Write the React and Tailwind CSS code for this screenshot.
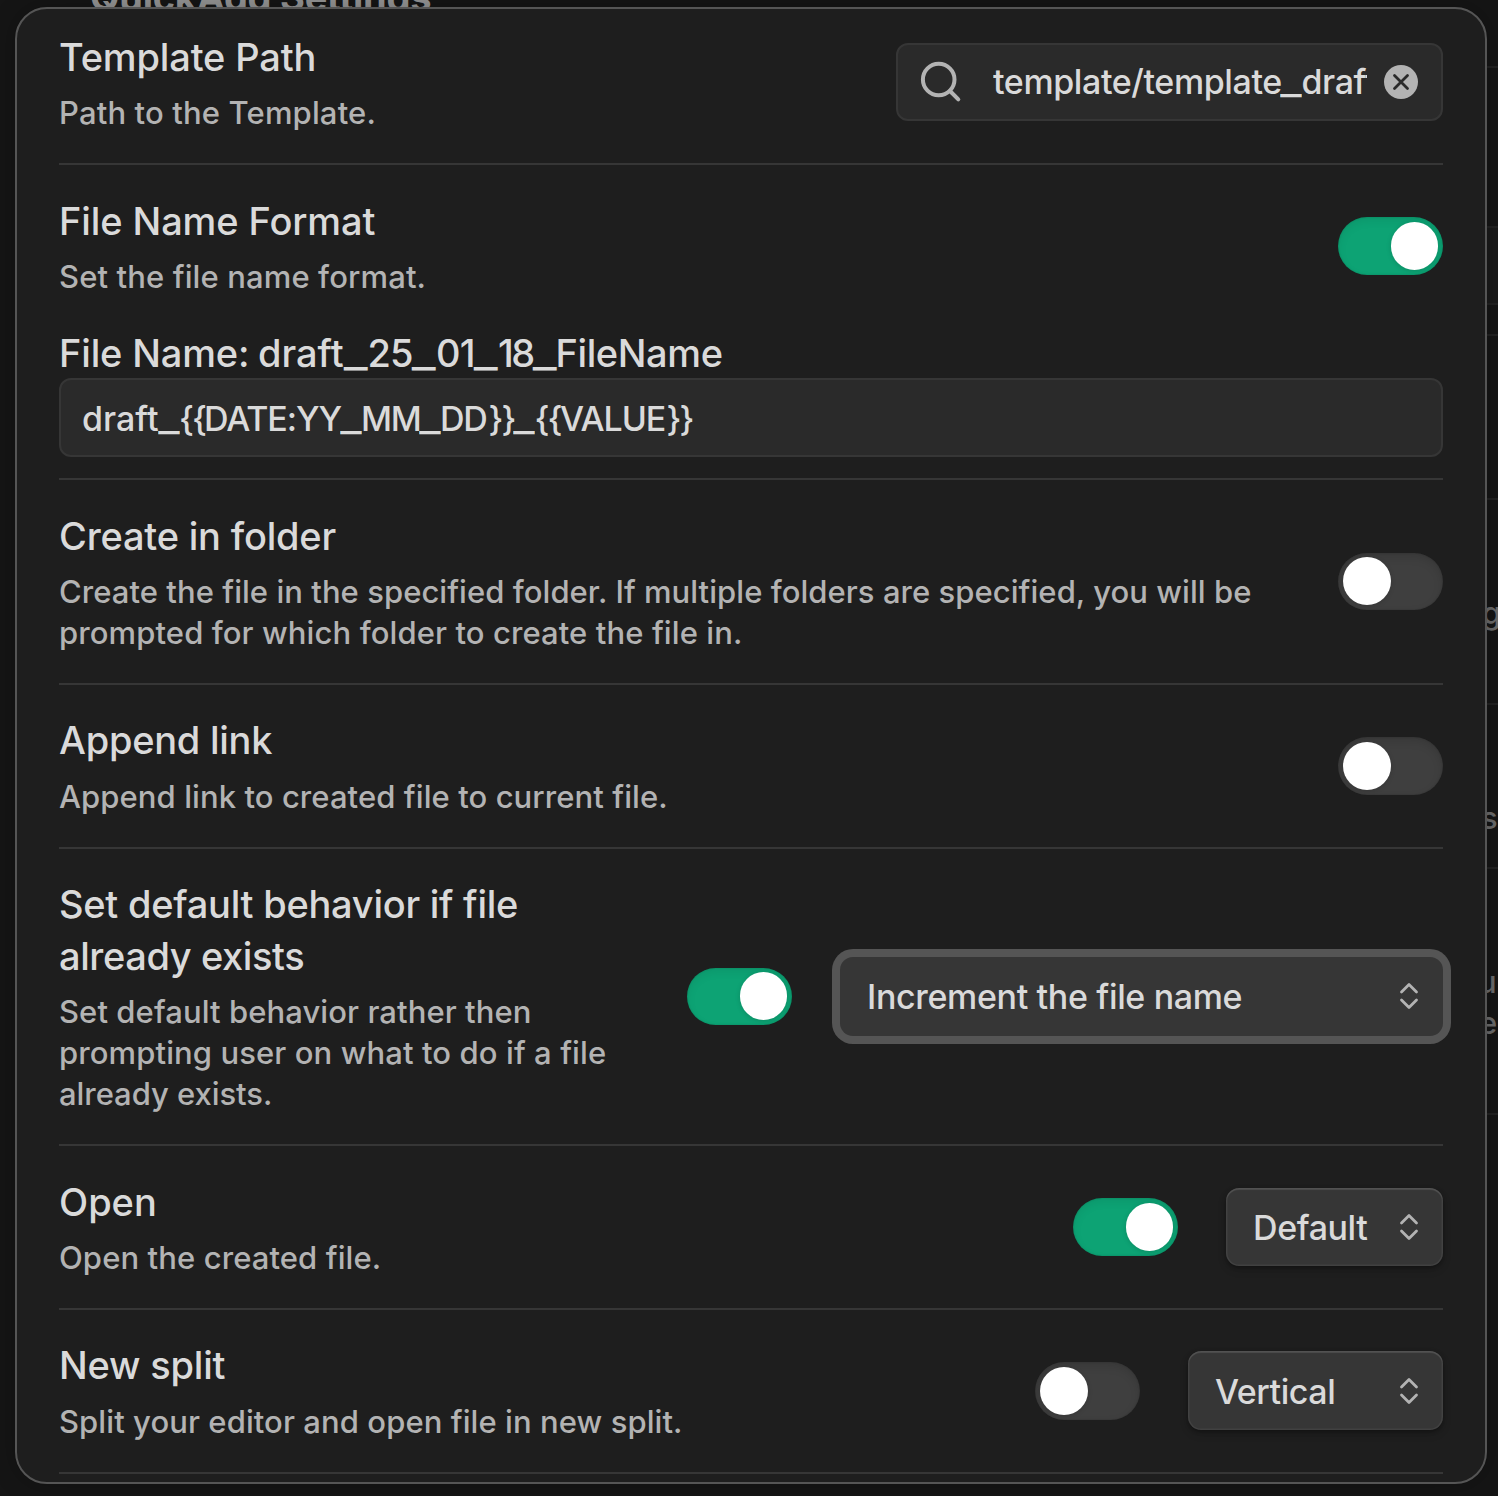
function Toggle({ on, short }) {
  return (
    <div
      className={
        "flex w-[105px] shrink-0 items-center rounded-full px-[5px] " +
        (short ? "-mt-px h-[57px] " : "h-[58px] ") +
        (on
          ? "justify-end bg-[#0da374] shadow-[inset_0_4px_10px_rgba(0,0,0,0.07),inset_0_0_2px_rgba(0,0,0,0.2)]"
          : "justify-start bg-[#3f3f3f] shadow-[inset_0_4px_10px_rgba(0,0,0,0.12),inset_0_0_2px_rgba(0,0,0,0.2)]")
      }
    >
      <div className="size-[47.5px] rounded-full bg-white shadow-[0_1px_5px_rgba(0,0,0,0.15)]" />
    </div>
  );
}

function Chevrons({ className = "" }) {
  return (
    <svg className={"shrink-0 " + className} width="20" height="28" viewBox="0 0 20 28" fill="none" stroke="#b3b3b3" strokeWidth="2.8" strokeLinecap="round" strokeLinejoin="round">
      <path d="M2.5 10 10 2.5 17.5 10M2.5 18 10 25.5 17.5 18" />
    </svg>
  );
}

function Select({ label, size, focused, tracking }) {
  return (
    <div
      className={
        "flex shrink-0 items-center justify-between rounded-[13px] bg-[#363636] pr-6 pl-[27px] text-[34px] text-[#dadada] " +
        size +
        (focused
          ? " shadow-[0_0_0_8px_#555555]"
          : " shadow-[inset_0_2px_1px_rgba(255,255,255,0.09),inset_0_0_0_1.5px_rgba(255,255,255,0.06),0_2px_4px_rgba(0,0,0,0.3),0_4px_10px_rgba(0,0,0,0.12)]")
      }
    >
      <span className={"whitespace-nowrap " + tracking}>{label}</span>
      <Chevrons className={focused ? "-mt-[2px]" : ""} />
    </div>
  );
}

/* A run of text in segments; underscores are stretched to the given advance. */
function Segments({ parts, bar }) {
  return parts.map(([text, style], i) =>
    text === "_" ? (
      <span key={i} className={"inline-block text-center tracking-normal " + bar}>
        <span className="inline-block scale-x-[1.36]">_</span>
      </span>
    ) : (
      <span key={i} className={"inline-block whitespace-pre " + style}>{text}</span>
    )
  );
}

const NAME_PARTS = [
  ["File Name: ", "tracking-[-0.15px] w-[199px]"],
  ["draft", "w-[85.5px]"],
  ["_"],
  ["25", "w-[44.5px] tracking-[-0.9px]"],
  ["_"],
  ["01", "w-[38px] tracking-[-0.8px]"],
  ["_"],
  ["18", "w-[34.5px] tracking-[-2.4px]"],
  ["_"],
  ["FileName", "-ml-px tracking-[-0.4px]"],
];

const FORMAT_PARTS = [
  ["draft", "w-[76.5px]"],
  ["_"],
  ["{{", "w-[25px] tracking-[-2px]"],
  ["DATE:YY", "w-[136.5px] tracking-[-1.1px]"],
  ["_"],
  ["MM", "w-[58.5px] tracking-[-1.2px]"],
  ["_"],
  ["DD", "w-[48.5px] tracking-[-1.2px]"],
  ["}}", "w-[25.5px] tracking-[-2px]"],
  ["_"],
  ["{{", "w-[25.5px] tracking-[-2px]"],
  ["VALUE", "w-[106.5px] tracking-[-1.1px]"],
  ["}}", "tracking-[-2px]"],
];

function Line({ children, track }) {
  return <div className={"whitespace-nowrap " + track}>{children}</div>;
}

function Row({ title, desc, height, pad = "pt-[30px]", gap = "mt-[9px]", first, children }) {
  return (
    <div className={"flex shrink-0 justify-between " + height + (first ? "" : " border-t-2 border-[#363636]")}>
      <div className={pad}>
        <div className="text-[38px] leading-[52px] text-[#dadada]">
          {title.map(([t, k]) => <Line key={t} track={k}>{t}</Line>)}
        </div>
        <div className={"text-[31px] leading-[41px] text-[#b3b3b3] " + gap}>
          {desc.map(([t, k]) => <Line key={t} track={k}>{t}</Line>)}
        </div>
      </div>
      <div className="flex items-center gap-12">{children}</div>
    </div>
  );
}

function Backdrop() {
  return (
    <div className="col-start-1 row-start-1 flex justify-between overflow-hidden">
      <div className="-mt-[27px] ml-[90px] text-[38px] leading-[48px] font-bold tracking-[-0.25px] whitespace-nowrap text-[#969696]">
        QuickAdd Settings
      </div>
      <div className="flex w-[14px] flex-col overflow-hidden text-[31px] leading-[41px] text-[#6c6c6c]">
        <div className="h-[66px]" />
        <div className="h-[160px] border-t-2 border-[#222222]" />
        <div className="h-[79px] border-y-2 border-[#222222] bg-[#1a1a1a]" />
        <div className="h-[29px]" />
        <div className="h-[164px] border-t-2 border-[#222222]" />
        <div className="h-[205px] border-t-2 border-[#222222] pt-[92px]"><div className="-ml-[2px]">g</div></div>
        <div className="h-[164px] border-t-2 border-[#222222] pt-[92px]"><div className="-ml-[3px]">s</div></div>
        <div className="h-[246px] border-t-2 border-[#222222] pt-[92px]">
          <div className="-ml-[6px] whitespace-nowrap">u.</div>
          <div className="-ml-[5px] whitespace-nowrap">ea</div>
        </div>
        <div className="h-[300px] border-t-2 border-[#222222]" />
      </div>
    </div>
  );
}

export default function App() {
  return (
    <div className="grid h-[1496px] w-[1498px] grid-cols-1 grid-rows-[1496px] overflow-hidden bg-[#151515] font-['Inter','Liberation_Sans',sans-serif] font-[450]">
      <Backdrop />
      <div className="z-10 col-start-1 row-start-1 mt-[7px] ml-[15px] flex h-[1477px] w-[1472px] flex-col overflow-hidden rounded-[32px] border-2 border-[#555555] bg-[#1e1e1e] px-[42px] shadow-[0_0_24px_rgba(0,0,0,0.25)]">
        <Row first height="h-[154px]" pad="pt-[22px]" title={[["Template Path", "tracking-[-0.15px]"]]} desc={[["Path to the Template.", "tracking-[0.15px]"]]}>
          <div className="-mt-[8px] flex h-[78px] w-[547px] items-center rounded-[12px] border-2 border-[#363636] bg-[#2a2a2a] pr-[23px] pl-[22px]">
            <svg className="shrink-0" width="44" height="44" viewBox="0 0 44 44" fill="none" stroke="#b3b3b3" strokeWidth="4" strokeLinecap="round">
              <circle cx="18.7" cy="19.5" r="15.8" />
              <path d="M30 31 38.3 39.3" />
            </svg>
            <div className="ml-[29px] w-[374px] shrink-0 overflow-hidden text-[34px] leading-[44px] whitespace-nowrap text-[#dadada]">
              <Segments
                parts={[["template/template", "w-[288px] tracking-[-0.4px]"], ["_"], ["draft", "tracking-[-0.4px]"]]}
                bar="w-[20.5px]"
              />
            </div>
            <svg className="ml-[17px] shrink-0" width="34" height="34" viewBox="0 0 34 34">
              <circle cx="17" cy="17" r="17" fill="#b3b3b3" />
              <path d="M10.5 10.5 23.5 23.5M23.5 10.5 10.5 23.5" stroke="#2a2a2a" strokeWidth="2.8" strokeLinecap="round" />
            </svg>
          </div>
        </Row>
        <Row height="h-[164px]" title={[["File Name Format", "tracking-[-0.1px]"]]} desc={[["Set the file name format.", "tracking-[0.12px]"]]}>
          <Toggle on />
        </Row>
        <div className="h-[151px] shrink-0">
          <div className="h-[51px] text-[38px] leading-[52px] whitespace-nowrap text-[#dadada]">
            <Segments parts={NAME_PARTS} bar="w-[24px]" />
          </div>
          <div className="flex h-[79px] items-center rounded-[12px] border-2 border-[#363636] bg-[#2a2a2a] px-[21px] pt-[2px] text-[34px] leading-[44px] text-[#dadada]">
            <div className="whitespace-nowrap">
              <Segments parts={FORMAT_PARTS} bar="w-[20.5px]" />
            </div>
          </div>
        </div>
        <Row
          height="h-[205px]"
          title={[["Create in folder", "tracking-[-0.2px]"]]}
          desc={[
            ["Create the file in the specified folder. If multiple folders are specified, you will be", "tracking-[0.05px]"],
            ["prompted for which folder to create the file in.", "tracking-[0.1px]"],
          ]}
        >
          <Toggle short />
        </Row>
        <Row height="h-[164px]" pad="pt-[29px]" gap="mt-[10px]" title={[["Append link", "tracking-[-0.25px]"]]} desc={[["Append link to created file to current file.", "tracking-[0.08px]"]]}>
          <Toggle />
        </Row>
        <Row
          height="h-[297px]"
          pad="pt-[29px]"
          title={[["Set default behavior if file", "tracking-[-0.25px]"], ["already exists", "tracking-[-0.4px]"]]}
          desc={[
            ["Set default behavior rather then", "tracking-[0.08px]"],
            ["prompting user on what to do if a file", "tracking-[0.1px]"],
            ["already exists.", "tracking-[-0.05px]"],
          ]}
        >
          <Toggle on short />
          <Select label="Increment the file name" size="h-[79px] w-[603px]" focused tracking="tracking-[-0.35px]" />
        </Row>
        <Row height="h-[164px]" title={[["Open", "tracking-[0px]"]]} desc={[["Open the created file.", "tracking-[0.1px]"]]}>
          <Toggle on />
          <Select label="Default" size="h-[78px] w-[217px]" tracking="tracking-[-0.4px]" />
        </Row>
        <Row height="h-[164px]" pad="pt-[29px]" gap="mt-[10px]" title={[["New split", "tracking-[-0.2px]"]]} desc={[["Split your editor and open file in new split.", "tracking-[0.08px]"]]}>
          <Toggle />
          <Select label="Vertical" size="-mt-px h-[79px] w-[255px]" tracking="pt-[2px] tracking-[-0.45px]" />
        </Row>
        <div className="shrink-0 border-t-2 border-[#363636]" />
      </div>
    </div>
  );
}
